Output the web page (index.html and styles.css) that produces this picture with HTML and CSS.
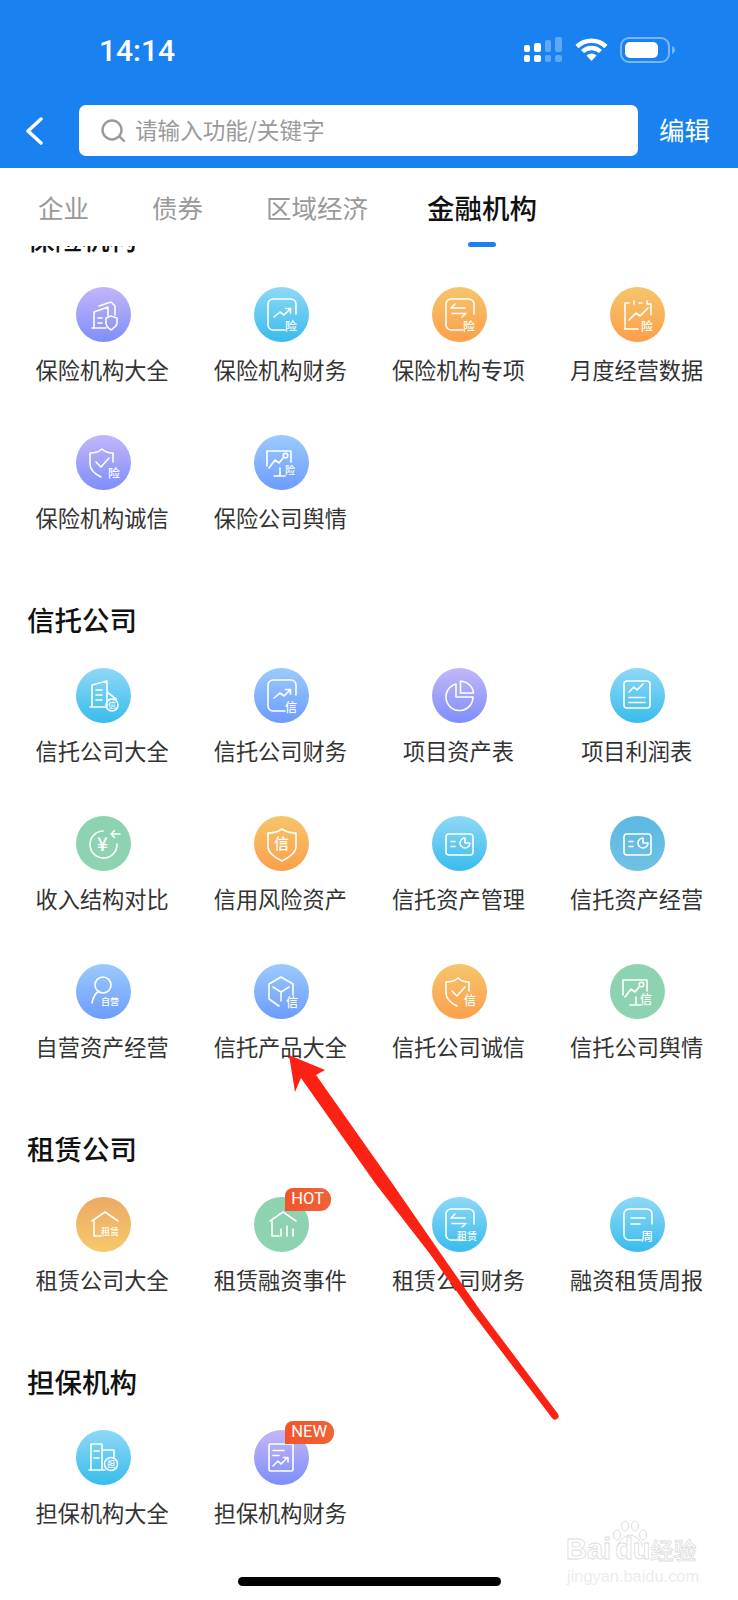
FILE: index.html
```html
<!DOCTYPE html>
<html lang="zh-CN">
<head>
<meta charset="utf-8">
<title>金融机构</title>
<link rel="stylesheet" href="styles.css">
</head>
<body>
<svg class="defs" width="0" height="0" aria-hidden="true">
  <symbol id="frame" viewBox="0 0 55 55"><path d="M31 43H19a5 5 0 0 1-5-5V17a5 5 0 0 1 5-5h18a5 5 0 0 1 5 5v10"/></symbol>
  <symbol id="swap" viewBox="0 0 55 55"><path d="M23 17l-4 4h14M20 26.500h14l-4 3.500"/></symbol>
  <symbol id="trend" viewBox="0 0 55 55"><path d="M20 30l6-5 4 3 6-6M31.500 21.500H36.500v4.500"/></symbol>
  <symbol id="board" viewBox="0 0 55 55"><path d="M13 31V16H37V27M15 33l6-8 4 3 4-5M20 41H31M26 33V41"/><circle cx="31.500" cy="20.500" r="2.300"/></symbol>
  <symbol id="shield" viewBox="0 0 55 55"><path d="M14 18c5 0 9-1 12-4 3 3 7 4 11 4v9M14 18v11c0 6 5 10 11 13M20 27l5 5 8-9"/></symbol>
  <symbol id="roof" viewBox="0 0 55 55"><path d="M16 24l13-9 13 9M18 23V39H25"/></symbol>
  <symbol id="card" viewBox="0 0 55 55"><rect x="14" y="18" width="27" height="21" rx="3"/><path d="M19 25.500h4M19 30.500h4M33 22a5 5 0 1 0 5 5H33z"/></symbol>
</svg>
<div class="app">
  <header class="head">
    <div class="status">
      <span class="time">14:14</span>
      <div class="status-icons">
        <svg class="sig" viewBox="0 0 38 26" width="38" height="26"><rect class="on" x="0" y="8" width="6" height="7" rx="2"/><rect class="on" x="10" y="6" width="7" height="9" rx="2"/><rect class="off" x="21" y="3" width="6" height="12" rx="2"/><rect class="off" x="31" y="0" width="7" height="15" rx="2"/><rect class="on" x="0" y="18" width="6" height="7" rx="2"/><rect class="on" x="10" y="18" width="7" height="7" rx="2"/><rect class="off" x="21" y="18" width="6" height="7" rx="2"/><rect class="off" x="31" y="18" width="7" height="7" rx="2"/></svg>
        <svg class="wifi" viewBox="0 0 33 24" width="33" height="24"><path d="M2 9.500a21 21 0 0 1 29 0M7.500 14.500a13 13 0 0 1 18 0"/><path class="wifi-dot" d="M11.500 18.500a7 7 0 0 1 10 0L16.500 24z"/></svg>
        <svg class="batt" viewBox="0 0 55 26" width="55" height="26"><rect class="batt-out" x="1" y="1" width="48" height="24" rx="8"/><rect class="batt-in" x="5" y="5" width="33" height="16" rx="5"/><path class="batt-nub" d="M52 9c2 1 3 2.500 3 4s-1 3-3 4z"/></svg>
      </div>
    </div>
    <div class="nav">
      <svg class="back" viewBox="0 0 20 28" width="20" height="28"><path d="M17 2L4 14l13 12"/></svg>
      <div class="search">
        <svg class="glass" viewBox="0 0 26 24" width="26" height="24"><circle cx="11" cy="11" r="9.500"/><path d="M19 18l4 4"/></svg>
        <span class="hint">请输入功能/关键字</span>
      </div>
      <span class="edit">编辑</span>
    </div>
  </header>

  <nav class="tabs">
    <span class="tab">企业</span>
    <span class="tab">债券</span>
    <span class="tab">区域经济</span>
    <span class="tab active">金融机构</span>
  </nav>

  <main class="content">
    <section class="sec first">
      <h2>保险机构</h2>
      <div class="grid">
        <div class="item"><div class="ico purple"><svg class="ic" viewBox="0 0 55 55"><path d="M16 41H30M18 41V25l14-5v9M23 19l12-4 4 4v9M22 31h4M22 36h4"/><path d="M30 31l5-2 6 2v5c0 3-3 5-6 7-3-2-5-4-5-7z"/></svg></div><p>保险机构大全</p></div>
        <div class="item"><div class="ico cyan"><svg class="ic" viewBox="0 0 55 55"><use href="#frame"/><use href="#trend"/><text x="31" y="44">险</text></svg></div><p>保险机构财务</p></div>
        <div class="item"><div class="ico orange"><svg class="ic" viewBox="0 0 55 55"><use href="#frame"/><use href="#swap"/><text x="31" y="44">险</text></svg></div><p>保险机构专项</p></div>
        <div class="item"><div class="ico orange"><svg class="ic" viewBox="0 0 55 55"><path d="M19 16h-4v26h13M24 14v3M29 16h3M37 14v3h4v11M19 33l7-7 4 3 8-8"/><text x="31" y="44">险</text></svg></div><p>月度经营数据</p></div>
        <div class="item"><div class="ico purple"><svg class="ic" viewBox="0 0 55 55"><use href="#shield"/><text x="32" y="43">险</text></svg></div><p>保险机构诚信</p></div>
        <div class="item"><div class="ico blue"><svg class="ic" viewBox="0 0 55 55"><use href="#board"/><text class="s10" x="31" y="39">险</text></svg></div><p>保险公司舆情</p></div>
      </div>
    </section>

    <section class="sec">
      <h2>信托公司</h2>
      <div class="grid">
        <div class="item"><div class="ico cyan"><svg class="ic" viewBox="0 0 55 55"><path d="M14 39H30M16 39V17l15-4v26M20 22h6M20 27h6M20 32h6M31 24l9 7v1"/><circle cx="36" cy="37" r="6"/><text class="s8" x="32" y="40">信</text></svg></div><p>信托公司大全</p></div>
        <div class="item"><div class="ico blue"><svg class="ic" viewBox="0 0 55 55"><use href="#frame"/><use href="#trend"/><text x="31" y="44">信</text></svg></div><p>信托公司财务</p></div>
        <div class="item"><div class="ico purple"><svg class="ic" viewBox="0 0 55 55"><path d="M24 16a13.500 13.500 0 1 0 17 13H24z"/><path d="M28.500 13c7 .5 12.500 5.500 13 12h-13z"/></svg></div><p>项目资产表</p></div>
        <div class="item"><div class="ico cyan"><svg class="ic" viewBox="0 0 55 55"><rect x="14" y="13" width="26" height="27" rx="3"/><path d="M19 29.500h16M19 34.500h16M19 24l5-5 3 3 6-6"/></svg></div><p>项目利润表</p></div>
        <div class="item"><div class="ico green"><svg class="ic" viewBox="0 0 55 55"><path d="M27 15a13.500 13.500 0 1 0 14 13M35 18h9M35 18l3.500-3.500M35 18l3.500 3.500"/><text class="s18" x="21" y="35">¥</text></svg></div><p>收入结构对比</p></div>
        <div class="item"><div class="ico orange"><svg class="ic" viewBox="0 0 55 55"><path d="M14 17c6 0 10-1 14-4 4 3 8 4 14 4v14c0 6-6 10-14 14-8-4-14-8-14-14z"/><text class="s16" x="20" y="33">信</text></svg></div><p>信用风险资产</p></div>
        <div class="item"><div class="ico cyan"><svg class="ic" viewBox="0 0 55 55"><use href="#card"/></svg></div><p>信托资产管理</p></div>
        <div class="item"><div class="ico teal"><svg class="ic" viewBox="0 0 55 55"><use href="#card"/></svg></div><p>信托资产经营</p></div>
        <div class="item"><div class="ico blue"><svg class="ic" viewBox="0 0 55 55"><circle cx="27" cy="21" r="8"/><path d="M16 39c1-6 4-10 7-12"/><text class="s9" x="25" y="41">自营</text></svg></div><p>自营资产经营</p></div>
        <div class="item"><div class="ico blue"><svg class="ic" viewBox="0 0 55 55"><path d="M27 13l12 7v11M27 13l-12 7v15l10 7M19 23l8 5 8-5M27 28v9"/><text x="32" y="43">信</text></svg></div><p>信托产品大全</p></div>
        <div class="item"><div class="ico orange"><svg class="ic" viewBox="0 0 55 55"><use href="#shield"/><text x="32" y="41">信</text></svg></div><p>信托公司诚信</p></div>
        <div class="item"><div class="ico green"><svg class="ic" viewBox="0 0 55 55"><use href="#board"/><text x="30" y="40">信</text></svg></div><p>信托公司舆情</p></div>
      </div>
    </section>

    <section class="sec">
      <h2>租赁公司</h2>
      <div class="grid">
        <div class="item"><div class="ico sand"><svg class="ic" viewBox="0 0 55 55"><use href="#roof"/><text class="s9" x="25" y="38">租赁</text></svg></div><p>租赁公司大全</p></div>
        <div class="item"><div class="ico green"><svg class="ic" viewBox="0 0 55 55"><use href="#roof"/><path d="M27 32v7M33 29v10M39 32v7"/></svg><span class="badge">HOT</span></div><p>租赁融资事件</p></div>
        <div class="item"><div class="ico cyan"><svg class="ic" viewBox="0 0 55 55"><use href="#frame"/><use href="#swap"/><text class="s10" x="25" y="43">租赁</text></svg></div><p>租赁公司财务</p></div>
        <div class="item"><div class="ico cyan"><svg class="ic" viewBox="0 0 55 55"><use href="#frame"/><path d="M21 21h14M21 27h9"/><text x="31" y="44">周</text></svg></div><p>融资租赁周报</p></div>
      </div>
    </section>

    <section class="sec">
      <h2>担保机构</h2>
      <div class="grid">
        <div class="item"><div class="ico cyan"><svg class="ic" viewBox="0 0 55 55"><path d="M13 40H29M15 40V14H26V40M18 21h5M18 28h5M26 20H38V27"/><circle cx="35" cy="34" r="6.500"/><text class="s8" x="31" y="37">担</text></svg></div><p>担保机构大全</p></div>
        <div class="item"><div class="ico purple"><svg class="ic" viewBox="0 0 55 55"><rect x="15" y="14" width="24" height="27" rx="1.500"/><path d="M19 20.500h11M19 25.500h6M19 36l5-5 3 3 6-6M29.500 27.500H34V32"/></svg><span class="badge">NEW</span></div><p>担保机构财务</p></div>
      </div>
    </section>
  </main>

  <svg class="arrow" viewBox="0 0 738 1600" width="738" height="1600" aria-hidden="true">
    <path d="M289 1055L325 1070L316 1075L392 1183L441 1254L480 1310L558 1414A3.500 3.500 0 0 1 552 1418L470 1310L430 1254L375 1183L301 1078L295 1092Z"/>
  </svg>

  <div class="mark">
    <div class="mark-top">
      <span>Bai</span>
      <svg class="paw" viewBox="0 0 40 28" width="40" height="28"><ellipse cx="7" cy="15" rx="3.500" ry="5"/><ellipse cx="15" cy="6" rx="3.500" ry="5"/><ellipse cx="25" cy="6" rx="3.500" ry="5"/><ellipse cx="33" cy="15" rx="3.500" ry="5"/><path d="M8 27c-1-5 7-12 12-12s13 7 12 12"/></svg>
      <span class="mark-du">du</span>
      <span class="mark-cn">经验</span>
    </div>
    <div class="mark-url">jingyan.baidu.com</div>
  </div>

  <div class="home"></div>
</div>
</body>
</html>
```

FILE: styles.css
```css
* { box-sizing: border-box; }
html, body { margin: 0; padding: 0; background: #fff; }
body { font-family: "Noto Sans CJK SC", "Noto Sans", sans-serif; }
.defs { position: absolute; }

.app {
  position: relative;
  width: 738px;
  height: 1600px;
  overflow: hidden;
  display: flex;
  flex-direction: column;
  background: #fff;
}

.head {
  height: 168px;
  flex: none;
  background: #1a82f0;
  color: #fff;
}

.status {
  height: 105px;
  display: flex;
  align-items: flex-start;
  justify-content: space-between;
  padding: 34px 63px 0 99px;
}
.time {
  font: 500 30px/34px Roboto, sans-serif;
}
.status-icons {
  display: flex;
  align-items: flex-start;
  gap: 12.500px;
  padding-top: 3px;
}
.sig .on { fill: #fff; }
.sig .off { fill: #5ea8f5; }
.wifi { fill: none; stroke: #fff; stroke-width: 4.500; }
.wifi .wifi-dot { fill: #fff; stroke: none; }
.batt .batt-out { fill: none; stroke: #7ab5f6; stroke-width: 2; }
.batt .batt-in { fill: #fff; }
.batt .batt-nub { fill: #7ab5f6; }

.nav {
  height: 51px;
  display: flex;
  align-items: center;
  padding-left: 24px;
}
.back {
  flex: none;
  fill: none;
  stroke: #fff;
  stroke-width: 3.500;
  stroke-linecap: round;
  stroke-linejoin: round;
}
.search {
  margin-left: 35px;
  width: 559px;
  height: 51px;
  background: #fff;
  border-radius: 7px;
  display: flex;
  align-items: center;
  gap: 8px;
  padding-left: 22px;
  font-size: 22.600px;
  color: #9a9a9a;
}
.hint { padding-bottom: 3px; }
.glass {
  flex: none;
  fill: none;
  stroke: #9a9a9a;
  stroke-width: 2.400;
  stroke-linecap: round;
}
.edit {
  margin-left: 21px;
  padding-bottom: 3px;
  font-size: 25.500px;
  line-height: 48px;
  color: #fff;
}

.tabs {
  position: relative;
  z-index: 1;
  height: 78px;
  flex: none;
  display: flex;
  align-items: center;
  padding: 0 0 0 38px;
  background: #fff;
  font-size: 25.500px;
  color: #999;
}
.tab { margin-right: 63px; line-height: 36px; position: relative; }
.tab:nth-child(3) { margin-right: 59px; }
.tab.active {
  font-size: 27.500px;
  font-weight: 500;
  color: #111;
}
.tab.active::after {
  content: "";
  position: absolute;
  left: 41px;
  top: 53px;
  width: 28px;
  height: 5px;
  border-radius: 3px;
  background: #1a82f0;
}

.content { flex: 1; overflow: hidden; }

.sec { padding-top: 18px; }
.sec.first { padding-top: 0; margin-top: -26px; }
.sec h2 {
  margin: 0 0 31px;
  padding-left: 27px;
  font-size: 27.500px;
  font-weight: 500;
  line-height: 36px;
  color: #111;
}

.grid {
  display: grid;
  grid-template-columns: repeat(4, 178.2px);
  padding-left: 14px;
}
.item {
  height: 148px;
  display: flex;
  flex-direction: column;
  align-items: center;
}
.item p {
  margin: 11.500px 0 0;
  font-size: 22.200px;
  line-height: 30px;
  color: #333;
  white-space: nowrap;
  position: relative;
  left: -1px;
}

.ico {
  position: relative;
  width: 55px;
  height: 55px;
  border-radius: 50%;
  flex: none;
}
.purple { background: linear-gradient(#c3b6f9, #7d8efa); }
.cyan { background: linear-gradient(#8fd8f6, #38bcec); }
.orange { background: linear-gradient(#f5c56b, #fc9f4b); }
.blue { background: linear-gradient(#9ccafd, #6c9cfc); }
.green { background: #8ed3b1; }
.teal { background: linear-gradient(#5cb8e4, #6fc2e4); }
.sand { background: linear-gradient(#eda965, #f6c96c); }

.ic {
  display: block;
  width: 55px;
  height: 55px;
  fill: none;
  stroke: #fff;
  stroke-width: 1.600;
  stroke-linecap: round;
  stroke-linejoin: round;
}
.ic text {
  fill: #fff;
  stroke: none;
  font-size: 12px;
  font-weight: 500;
  font-family: "Noto Sans CJK SC", sans-serif;
}
.ic text.s8 { font-size: 8px; }
.ic text.s9 { font-size: 9px; }
.ic text.s10 { font-size: 10px; }
.ic text.s16 { font-size: 15px; }
.ic text.s18 { font-size: 19px; }

.badge {
  position: absolute;
  left: 31px;
  top: -9px;
  height: 22.500px;
  padding: 0 6.500px;
  border-radius: 8px 11px 11px 0;
  background: linear-gradient(90deg, #f2542a, #ee6436);
  color: #fff;
  font: 16.500px/22.500px Roboto, sans-serif;
}

.arrow {
  position: absolute;
  left: 0;
  top: 0;
  z-index: 2;
  fill: #fb2213;
  pointer-events: none;
}

.mark {
  position: absolute;
  left: 566px;
  top: 1518px;
  width: 134px;
}
.mark-top {
  display: flex;
  align-items: flex-end;
  height: 46px;
  font: 700 29px/30px "Liberation Sans", sans-serif;
  -webkit-text-stroke: 0.800px #dcdcdc;
  color: #fff;
}
.paw {
  position: absolute;
  left: 44px;
  top: 2px;
  fill: none;
  stroke: #dcdcdc;
  stroke-width: 1;
}
.mark-du { margin-left: 4px; }
.mark-cn {
  font: 500 23px/30px "Noto Sans CJK SC", sans-serif;
  -webkit-text-stroke: 0.800px #dcdcdc;
}
.mark-url {
  margin-top: 3px;
  padding-left: 1px;
  font: 16.400px/18px "Liberation Sans", sans-serif;
  color: #ececec;
  white-space: nowrap;
}

.home {
  position: absolute;
  left: 238px;
  top: 1577px;
  width: 263px;
  height: 9px;
  border-radius: 5px;
  background: #000;
  z-index: 3;
}
```
